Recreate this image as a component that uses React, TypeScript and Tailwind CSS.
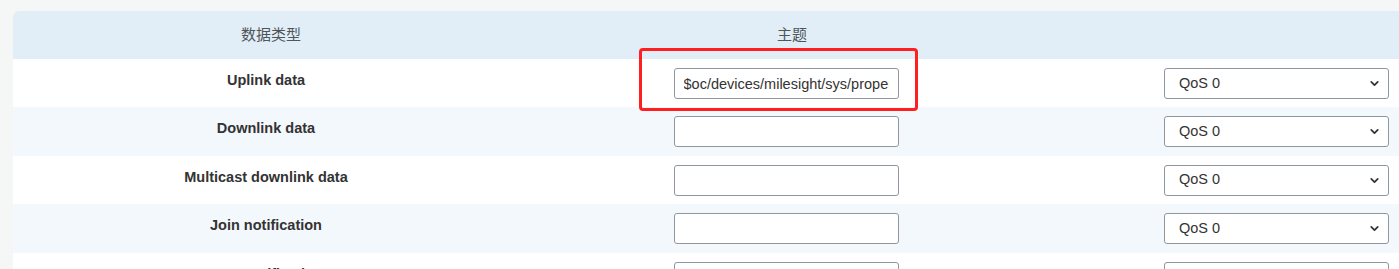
import { ChevronDown } from "lucide-react";

const ROWS = [
  { key: "uplink", label: "Uplink data", topic: "$oc/devices/milesight/sys/properties/report" },
  { key: "downlink", label: "Downlink data", topic: "" },
  { key: "multicast", label: "Multicast downlink data", topic: "" },
  { key: "join", label: "Join notification", topic: "" },
  { key: "ack", label: "ACK notification", topic: "" },
];

function QosSelect() {
  return (
    <div className="relative w-[225px]">
      <select
        defaultValue="0"
        className="h-[31px] w-full appearance-none rounded-[3px] border border-[#8e979f] bg-white pl-[14px] text-left text-[14.5px] text-[#333] outline-none"
      >
        <option value="0">QoS 0</option>
        <option value="1">QoS 1</option>
        <option value="2">QoS 2</option>
      </select>
      <ChevronDown
        size={13}
        strokeWidth={3.2}
        className="pointer-events-none absolute right-[8px] top-[9px] text-[#333]"
      />
    </div>
  );
}

export default function App() {
  return (
    <div
      className="relative min-h-[269px] bg-[#f5f7f7] pl-[13px] pt-[11px]"
      style={{ fontFamily: '"Liberation Sans", Arial, "Noto Sans CJK SC", sans-serif' }}
    >
      <div className="overflow-hidden rounded-tl-[6px]">
        <table className="w-[1386px] table-fixed border-collapse">
          <colgroup>
            <col className="w-[506px]" />
            <col className="w-[534px]" />
            <col />
          </colgroup>
          <thead>
            <tr className="h-12 bg-[#e1eef8] text-[15px] font-normal text-[#505559]">
              <th className="pl-[10px] text-center font-normal">数据类型</th>
              <th className="pl-3 text-center font-normal">主题</th>
              <th />
            </tr>
          </thead>
          <tbody>
            {ROWS.map((row, i) => (
              <tr key={row.key} className={i % 2 === 0 ? "h-[48.4px] bg-white" : "h-[48.4px] bg-[#f3f8fc]"}>
                <td className="pt-[13px] text-center align-top text-[14.5px] font-bold leading-4 text-[#333]">
                  {row.label}
                </td>
                <td className="pt-[9px] text-center align-top">
                  <input
                    type="text"
                    defaultValue={row.topic}
                    className="h-[31px] w-[225px] rounded-[3px] border border-[#8e979f] bg-white px-[9px] text-[14.5px] text-[#333] outline-none"
                  />
                </td>
                <td className="pr-[10px] pt-[9px] align-top">
                  <div className="flex justify-end">
                    <QosSelect />
                  </div>
                </td>
              </tr>
            ))}
          </tbody>
        </table>
      </div>

      <div className="pointer-events-none absolute left-[639px] top-[48px] h-[63px] w-[279px] rounded-[4px] border-[3px] border-[#ff1f1f]" />
    </div>
  );
}
